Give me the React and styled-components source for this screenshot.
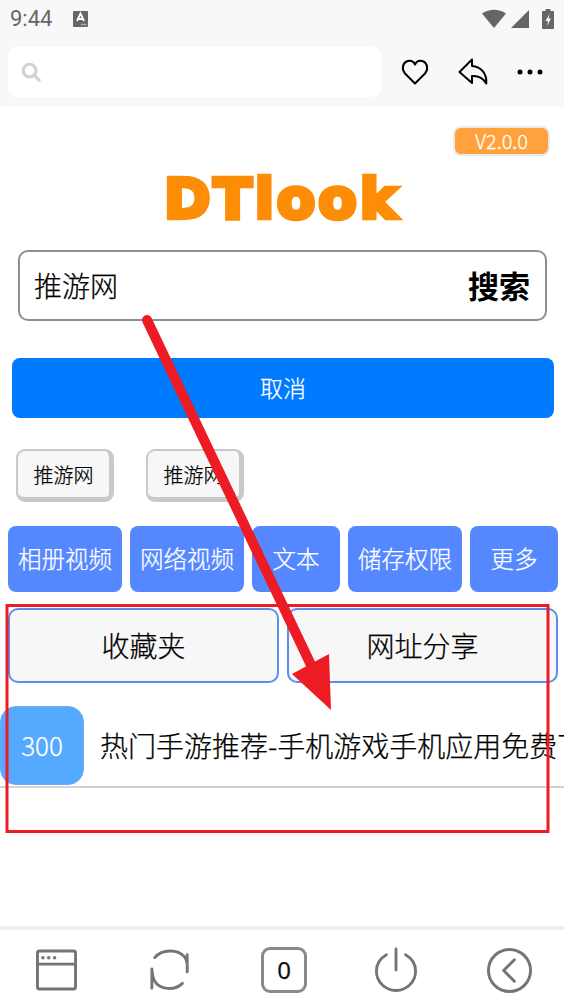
import React from "react";
import styled, { createGlobalStyle } from "styled-components";

const Global = createGlobalStyle`
  html, body { margin: 0; padding: 0; background: #fff; }
  * { box-sizing: border-box; }
  body { font-family: "Noto Sans CJK SC", "Noto Sans", sans-serif; font-weight: 300; color: #000; -webkit-text-stroke: 0.25px currentColor; }
`;

const Page = styled.div`
  position: relative;
  width: 564px;
  height: 1004px;
  overflow: hidden;
  display: flex;
  flex-direction: column;
  background: #fff;
`;
const Header = styled.header`
  height: 107px;
  background: #f8f8f8;
  flex: none;
`;
const StatusBar = styled.div`
  height: 36px;
  padding: 1px 10px 0 10px;
  display: flex;
  align-items: center;
  color: #666;
  font: 400 22px/1 Roboto, sans-serif;
  -webkit-text-stroke: 0;
`;
const Time = styled.span`
  width: 63px;
`;
const StatusRight = styled.div`
  margin-left: auto;
  display: flex;
  align-items: center;
`;
const Toolbar = styled.div`
  height: 71px;
  padding: 11px 0 10px 8px;
  display: flex;
  align-items: flex-start;
`;
const SearchBox = styled.div`
  width: 374px;
  height: 50px;
  background: #fff;
  border-radius: 10px;
  display: flex;
  align-items: center;
  padding-left: 13px;
`;
const ToolIcons = styled.div`
  display: flex;
  align-items: center;
  height: 50px;
  margin-left: 19px;
  gap: 29px;
`;
const Main = styled.main`
  flex: 1;
  display: flex;
  flex-direction: column;
`;
const VersionRow = styled.div`
  display: flex;
  justify-content: flex-end;
  padding: 19px 14px 0 0;
`;
const Version = styled.div`
  width: 97px;
  height: 30px;
  border: 2px solid #eaeaea;
  border-radius: 8px;
  background: #ffa23e;
  color: #fff;
  font-size: 20px;
  line-height: 25px;
  text-align: center;
`;
const Logo = styled.h1`
  margin: 9px 0 0;
  height: 72px;
  text-align: center;
  font: 700 56px/68px "DejaVu Sans", sans-serif;
  letter-spacing: 3px;
  color: #fd8c06;
  -webkit-text-stroke: 4.5px #fd8c06;
`;
const SearchField = styled.div`
  margin: 13px 17px 0 18px;
  height: 71px;
  border: 2px solid #8f8f8f;
  border-radius: 10px;
  display: flex;
  align-items: center;
  justify-content: space-between;
  padding: 0 15px 2px 14px;
`;
const Query = styled.span`
  font-size: 28px;
`;
const SearchAction = styled.span`
  font-size: 31px;
  font-weight: 700;
  -webkit-text-stroke: 0;
`;
const CancelButton = styled.div`
  margin: 37px 10px 0 12px;
  height: 60px;
  border-radius: 8px;
  background: #007aff;
  color: #fff;
  font-size: 23px;
  display: flex;
  align-items: center;
  justify-content: center;
  padding-bottom: 2px;
`;
const ChipRow = styled.div`
  margin: 31px 0 0 16px;
  display: flex;
  gap: 32px;
`;
const Chip = styled.div`
  width: 98px;
  height: 53px;
  border: 2px solid #c9c9c9;
  border-width: 2px 5px 5px 2px;
  border-radius: 9px;
  background: #f7f7f7;
  font-size: 20px;
  display: flex;
  align-items: center;
  justify-content: center;
`;
const ActionRow = styled.div`
  margin: 24px 6px 0 8px;
  display: flex;
  gap: 8px;
`;
const ActionButton = styled.div`
  flex: ${(p) => (p.$wide ? "0 0 114px" : "0 0 88px")};
  height: 66px;
  border-radius: 8px;
  background: #5588ff;
  color: #fff;
  font-size: 23.5px;
  display: flex;
  align-items: center;
  justify-content: center;
  padding-bottom: 2px;
`;
const TabRow = styled.div`
  margin: 16px 6px 0 8px;
  display: flex;
  gap: 8px;
`;
const Tab = styled.div`
  flex: 1;
  height: 75px;
  border: 2px solid #5b8def;
  border-radius: 10px;
  background: #f7f7f7;
  font-size: 28px;
  display: flex;
  align-items: center;
  justify-content: center;
  padding-bottom: 2px;
`;
const ListItem = styled.div`
  margin-top: 23px;
  height: 82px;
  border-bottom: 2px solid #d2d2d2;
  display: flex;
  align-items: flex-start;
  white-space: nowrap;
  overflow: hidden;
`;
const Count = styled.div`
  flex: none;
  width: 84px;
  height: 79px;
  border-radius: 16px;
  border: 1px solid #69aef5;
  background: #55aaff;
  color: #fff;
  font-size: 26px;
  display: flex;
  align-items: center;
  justify-content: center;
  padding-bottom: 3px;
`;
const ItemTitle = styled.div`
  margin-left: 16px;
  font-size: 28px;
  line-height: 79px;
`;
const BottomBar = styled.nav`
  flex: none;
  height: 78px;
  border-top: 4px solid #eeeeee;
  display: flex;
  align-items: center;
  padding: 6px 0 0 33px;
  gap: 68px;
`;
const TabCount = styled.div`
  width: 46px;
  height: 46px;
  border: 3px solid #8a8a8a;
  border-radius: 9px;
  font: 400 24px/1 "Noto Sans", sans-serif;
  color: #111;
  display: flex;
  align-items: center;
  justify-content: center;
`;
const Mark = styled.svg`
  position: absolute;
  left: 0;
  top: 0;
  pointer-events: none;
`;
const Slot = styled.div`
  width: 46px;
  height: 46px;
  margin-left: ${(p) => p.$pull || 0}px;
  display: flex;
  align-items: center;
  justify-content: center;
`;

const Stroke = { fill: "none", stroke: "#757575", strokeWidth: 3, strokeLinecap: "round", strokeLinejoin: "round" };

export default function App() {
  return (
    <Page>
      <Global />
      <Header>
        <StatusBar>
          <Time>9:44</Time>
          <svg width="15" height="16" viewBox="0 0 15 16">
            <rect width="15" height="16" rx="1" fill="#666" />
            <path d="M4 10 7.500 2.500 11 10M5.400 8h4.200" fill="none" stroke="#fff" strokeWidth="1.800" />
            <path d="M8 13.500h1.500M10.500 13.500h1.500M12.500 13.500h1" stroke="#ccc" strokeWidth="1.500" />
          </svg>
          <StatusRight>
            <svg width="24" height="19" viewBox="0 0 24 19"><path d="M0 4.500Q12-3 24 4.500L12 19Z" fill="#666" /></svg>
            <svg width="18" height="18" viewBox="0 0 18 18" style={{ marginLeft: 5 }}><path d="M18 0V18H0Z" fill="#666" /></svg>
            <svg width="12" height="20" viewBox="0 0 12 20" style={{ marginLeft: 13 }}>
              <path d="M0 2h3.500V0h5v2H12v18H0Z" fill="#666" />
              <path d="M7.500 5 3.500 12h2.500l-1 5 4-7.500H6.500Z" fill="#f8f8f8" />
            </svg>
          </StatusRight>
        </StatusBar>
        <Toolbar>
          <SearchBox>
            <svg width="20" height="20" viewBox="0 0 22 22" fill="none" stroke="#d2d2d2" strokeWidth="3.500">
              <circle cx="9.500" cy="9.500" r="7" />
              <path d="M15 15 20 20" strokeLinecap="round" />
            </svg>
          </SearchBox>
          <ToolIcons>
            <svg width="28" height="28" viewBox="0 0 28 28" fill="none" stroke="#000" strokeWidth="2" strokeLinejoin="round">
              <path d="M14 25.500 4 15.500C.5 11.500 1.500 5.500 5.500 3.500 9 1.800 12.500 3 14 6.500 15.500 3 19 1.800 22.500 3.500 26.500 5.500 27.500 11.500 24 15.500Z" />
            </svg>
            <svg width="30" height="28" viewBox="0 0 30 28" fill="none" stroke="#000" strokeWidth="2" strokeLinejoin="round">
              <path d="M14 1.500 1.500 14 14 25V18C20 17.500 25 20 28.300 25.500 29 16 23.500 8.500 14 8Z" />
            </svg>
            <svg width="26" height="8" viewBox="0 0 26 8" fill="#000">
              <circle cx="3" cy="4" r="2.500" /><circle cx="13" cy="4" r="2.500" /><circle cx="23" cy="4" r="2.500" />
            </svg>
          </ToolIcons>
        </Toolbar>
      </Header>
      <Main>
        <VersionRow><Version>V2.0.0</Version></VersionRow>
        <Logo>DTlook</Logo>
        <SearchField>
          <Query>推游网</Query>
          <SearchAction>搜索</SearchAction>
        </SearchField>
        <CancelButton>取消</CancelButton>
        <ChipRow>
          <Chip>推游网</Chip>
          <Chip>推游网</Chip>
        </ChipRow>
        <ActionRow>
          <ActionButton $wide>相册视频</ActionButton>
          <ActionButton $wide>网络视频</ActionButton>
          <ActionButton>文本</ActionButton>
          <ActionButton $wide>储存权限</ActionButton>
          <ActionButton>更多</ActionButton>
        </ActionRow>
        <TabRow>
          <Tab>收藏夹</Tab>
          <Tab>网址分享</Tab>
        </TabRow>
        <ListItem>
          <Count>300</Count>
          <ItemTitle>热门手游推荐-手机游戏手机应用免费下载</ItemTitle>
        </ListItem>
      </Main>
      <BottomBar>
        <Slot>
          <svg width="41" height="42" viewBox="0 0 42 42" {...Stroke}>
            <rect x="1.500" y="1.500" width="39" height="39" rx="2" />
            <path d="M1.500 15h39" />
            <path d="M7 8.500h.1M13 8.500h.1M19 8.500h.1" strokeWidth="3.500" />
          </svg>
        </Slot>
        <Slot>
          <svg width="42" height="44" viewBox="0 0 44 44" {...Stroke}>
            <path d="M6 9C14 0 30 0 37 8 41 13 40.500 19 40 24V6" />
            <path d="M35 36C27 44 11 43 5.500 33 3.500 29 3.500 25 3 21V41" />
          </svg>
        </Slot>
        <TabCount>0</TabCount>
        <Slot $pull={-2}>
          <svg width="42" height="46" viewBox="0 0 44 48" {...Stroke}>
            <path d="M22 2V24" />
            <path d="M12 8C5 12 1.500 18 1.500 25A20.500 20.500 0 0 0 42.500 25C42.500 18 39 12 32 8" />
          </svg>
        </Slot>
        <Slot $pull={-1}>
          <svg width="45" height="47" viewBox="0 0 46 48" {...Stroke}>
            <circle cx="23" cy="24" r="21.500" />
            <path d="M28 13 17 24l11 11" />
          </svg>
        </Slot>
      </BottomBar>
      <Mark width="564" height="1004" viewBox="0 0 564 1004">
        <rect x="7" y="605.500" width="541" height="226" fill="none" stroke="#ed1c24" strokeWidth="3" />
        <path d="M147 320 311 665" fill="none" stroke="#ed1c24" strokeWidth="10" strokeLinecap="round" />
        <path d="M331 710 292 674 329 654Z" fill="#ed1c24" />
      </Mark>
    </Page>
  );
}
